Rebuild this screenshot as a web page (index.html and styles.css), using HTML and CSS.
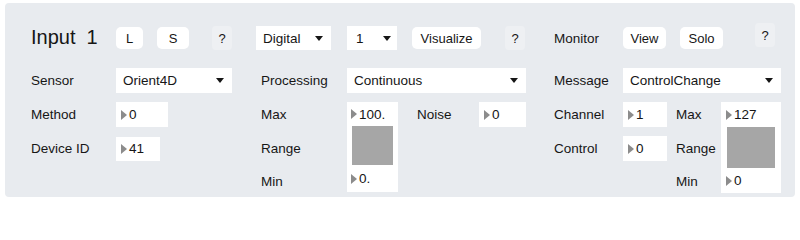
FILE: index.html
```html
<!DOCTYPE html>
<html>
<head>
<meta charset="utf-8">
<link rel="stylesheet" href="styles.css">
</head>
<body>
<div class="panel">
  <section class="sec sec-a">
    <div class="head">
      <div class="title"><span>Input</span><span class="num">1</span></div>
      <button class="btn b-l">L</button>
      <button class="btn b-s">S</button>
      <button class="btn help h-a">?</button>
    </div>
    <div class="grid grid-a">
      <span class="lbl">Sensor</span>
      <div class="dd w-sensor">Orient4D</div>
      <span class="lbl">Method</span>
      <div class="nb w-method">0</div>
      <span class="lbl">Device ID</span>
      <div class="nb w-device">41</div>
    </div>
  </section>

  <section class="sec sec-b">
    <div class="head">
      <div class="dd w-digital">Digital</div>
      <div class="dd w-one">1</div>
      <button class="btn b-vis">Visualize</button>
      <button class="btn help h-b">?</button>
    </div>
    <div class="grid grid-b">
      <span class="lbl">Processing</span>
      <div class="dd span-all">Continuous</div>
      <span class="lbl">Max</span>
      <div class="tall tall-b">
        <div class="nv top">100.</div>
        <div class="sq"></div>
        <div class="nv bot">0.</div>
      </div>
      <span class="lbl c4">Noise</span>
      <div class="nb c5">0</div>
      <span class="lbl r3">Range</span>
      <span class="lbl r4">Min</span>
    </div>
  </section>

  <section class="sec sec-c">
    <div class="head">
      <span class="lbl mon">Monitor</span>
      <button class="btn b-view">View</button>
      <button class="btn b-solo">Solo</button>
      <button class="btn help h-c">?</button>
    </div>
    <div class="grid grid-c">
      <span class="lbl">Message</span>
      <div class="dd span-all">ControlChange</div>
      <span class="lbl">Channel</span>
      <div class="nb c2">1</div>
      <span class="lbl c4">Max</span>
      <div class="tall tall-c">
        <div class="nv top">127</div>
        <div class="sq"></div>
        <div class="nv bot">0</div>
      </div>
      <span class="lbl r3 c1">Control</span>
      <div class="nb r3 c2">0</div>
      <span class="lbl r3 c4">Range</span>
      <span class="lbl r4 c4">Min</span>
    </div>
  </section>
</div>
</body>
</html>
```

FILE: styles.css
```css
* { box-sizing: border-box; }

body {
  margin: 0;
  background: #ffffff;
  font-family: "Liberation Sans", Arial, Helvetica, sans-serif;
  color: #161616;
}

.panel {
  margin: 3px 5px 0 5px;
  width: 790px;
  height: 194px;
  background: #e8ebef;
  border-radius: 4px;
  padding: 22px 0 0 26px;
  display: flex;
}

.sec { display: flex; flex-direction: column; }
.sec-a { width: 225px; }
.sec-b { width: 298px; }
.sec-c { flex: 1; }

.head {
  height: 26px;
  display: flex;
  align-items: center;
}

.title {
  width: 85px;
  font-size: 20px;
  display: flex;
  align-items: center;
  margin-top: -1px;
}
.title .num { margin-left: 11px; }

.btn {
  font-family: inherit;
  font-size: 13px;
  color: #161616;
  background: #ffffff;
  border: none;
  border-radius: 5px;
  height: 22px;
  padding: 0;
  display: flex;
  align-items: center;
  justify-content: center;
}

.help {
  width: 20px;
  height: 24px;
  background: #eef0f3;
  border-radius: 4px;
  font-size: 13px;
}

.b-l { width: 27px; }
.b-s { width: 32px; margin-left: 14px; }
.h-a { margin-left: 23px; }

.dd {
  background: #ffffff;
  height: 24px;
  font-size: 13.5px;
  display: flex;
  align-items: center;
  justify-content: space-between;
  padding: 0 8px 0 7px;
}
.dd::after {
  content: "";
  width: 0;
  height: 0;
  border-left: 4.5px solid transparent;
  border-right: 4.5px solid transparent;
  border-top: 5px solid #161616;
}

.w-digital { width: 75px; }
.w-one { width: 50px; margin-left: 16px; padding-left: 9px; padding-right: 6px; }
.b-vis { width: 69px; margin-left: 15px; }
.h-b { margin-left: 24px; }

.mon { width: 69px; }
.b-view { width: 43px; }
.b-solo { width: 43px; margin-left: 14px; }
.h-c { margin-left: 32px; align-self: flex-start; margin-top: -2px; }

.grid {
  margin-top: 17px;
  display: grid;
  grid-template-rows: 25px 25px 25px 22px;
  row-gap: 9px;
  align-items: center;
}

.grid-a { grid-template-columns: 85px auto; }
.grid-b { margin-left: 5px; grid-template-columns: 86px 51px 19px 62px 47px; }
.grid-c { grid-template-columns: 69px 44px 9px 45px 60px; }

.lbl { font-size: 13.5px; }

.w-sensor { width: 116px; justify-self: start; }

.grid .dd { height: 25px; }
.span-all { grid-column: 2 / -1; }

.nb {
  background: #ffffff;
  height: 25px;
  font-size: 13.5px;
  display: flex;
  align-items: center;
  padding-left: 5px;
  justify-self: start;
  width: 100%;
}
.grid-a .w-method { width: 52px; }
.grid-a .w-device { width: 44px; height: 24px; }

.nb::before, .nv::before {
  content: "";
  width: 0;
  height: 0;
  border-top: 5px solid transparent;
  border-bottom: 5px solid transparent;
  border-left: 6px solid #8c8c8c;
  margin-right: 2px;
}

.c1 { grid-column: 1; }
.c2 { grid-column: 2; }
.c4 { grid-column: 4; }
.c5 { grid-column: 5; }
.r3 { grid-row: 3; }
.r4 { grid-row: 4; }

.tall {
  grid-column: 2;
  grid-row: 2 / 5;
  align-self: stretch;
  background: #ffffff;
  display: flex;
  flex-direction: column;
}
.grid-c .tall { grid-column: 5; margin-bottom: -1px; }

.tall-b { padding: 0 5px; }
.tall-c { padding: 0 6px; }

.nv {
  font-size: 13.5px;
  display: flex;
  align-items: center;
  margin-left: -1px;
}
.tall-b .top { height: 24px; }
.tall-c .top { height: 25px; }
.nv.bot { flex: 1; }

.sq { background: #a6a6a6; }
.tall-b .sq { height: 39px; }
.tall-c .sq { height: 41px; }
```
